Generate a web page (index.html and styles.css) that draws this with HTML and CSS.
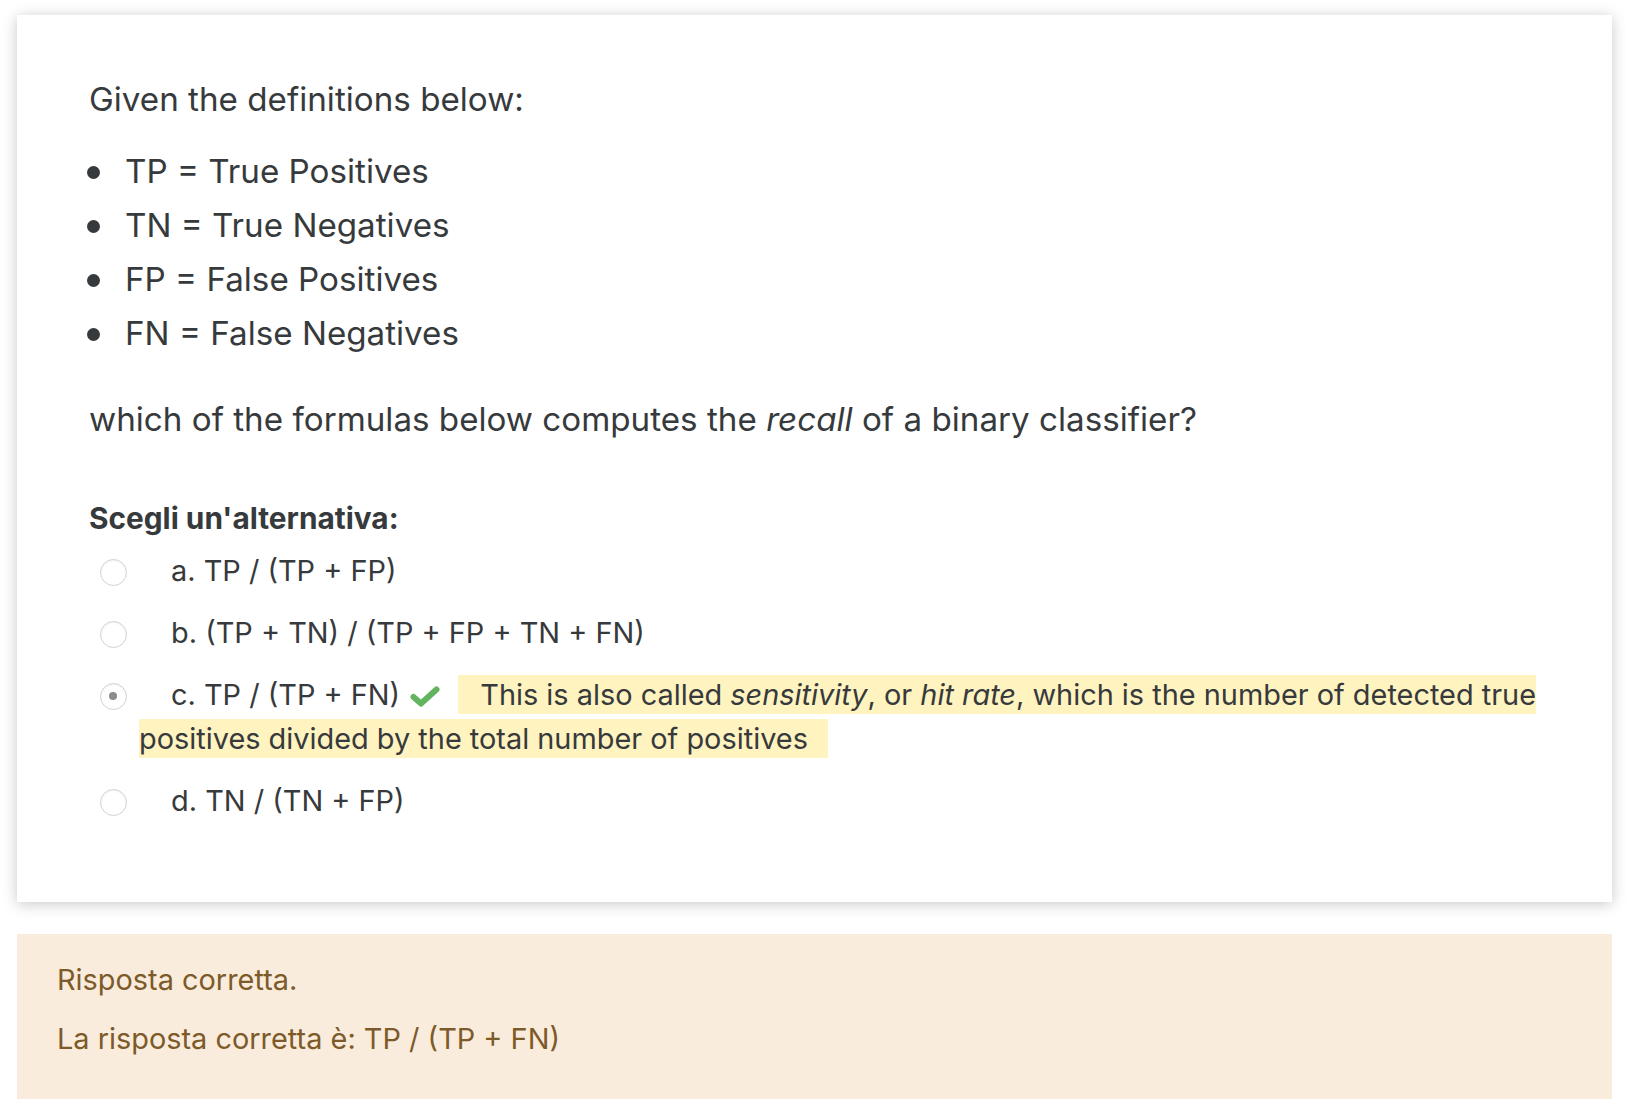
FILE: index.html
```html
<!DOCTYPE html>
<html lang="en">
<head>
<meta charset="utf-8">
<title>Quiz question</title>
<link rel="stylesheet" href="styles.css">
</head>
<body>
<div class="page">
  <div class="card">
    <div class="qtext">
      <p class="lead">Given the definitions below:</p>
      <ul class="defs">
        <li>TP = True Positives</li>
        <li>TN = True Negatives</li>
        <li>FP = False Positives</li>
        <li>FN = False Negatives</li>
      </ul>
      <p class="ask">which of the formulas below computes the <em>recall</em> of a binary classifier?</p>
    </div>
    <div class="prompt">Scegli un'alternativa:</div>
    <div class="answers">
      <div class="option"><span class="radio"></span><span class="label">a. TP / (TP + FP)</span></div>
      <div class="option"><span class="radio"></span><span class="label">b. (TP + TN) / (TP + FP + TN + FN)</span></div>
      <div class="option"><span class="radio checked"></span><span class="label">c. TP / (TP + FN)</span> <svg class="check" width="30" height="21" viewBox="0 0 30 21"><polyline points="3.5,11 11,17.5 26.5,3.5" fill="none" stroke="#62b45e" stroke-width="6" stroke-linecap="round" stroke-linejoin="round"/></svg><span class="fb">This is also called <em>sensitivity</em>, or <em>hit rate</em>, which is the number of detected true positives divided by the total number of positives</span></div>
      <div class="option"><span class="radio"></span><span class="label">d. TN / (TN + FP)</span></div>
    </div>
  </div>
  <div class="outcome">
    <p>Risposta corretta.</p>
    <p>La risposta corretta è: TP / (TP + FN)</p>
  </div>
</div>
</body>
</html>
```
FILE: styles.css
```css
html, body {
  margin: 0;
  padding: 0;
  background: #ffffff;
}
body {
  font-family: Inter, "Noto Sans", sans-serif;
  color: #373a3c;
}
.page {
  padding: 15px 18px 0 17px;
}
.card {
  background: #ffffff;
  box-shadow: 0 2px 14px rgba(0, 0, 0, 0.22);
  padding: 57px 72px 79px 72px;
}
.qtext {
  font-size: 33.2px;
  line-height: 54px;
}
.qtext p {
  margin: 0;
}
.defs {
  margin: 18px 0 32px 0;
  padding-left: 36px;
  list-style: none;
}
.defs li::before {
  content: "";
  display: inline-block;
  width: 13px;
  height: 13px;
  border-radius: 50%;
  background: #373a3c;
  margin-left: -38px;
  margin-right: 25px;
  vertical-align: 4px;
}
.prompt {
  margin-top: 52px;
  font-size: 29.8px;
  line-height: 40px;
  font-weight: 700;
}
.answers {
  margin-top: 11px;
  font-size: 28.9px;
  line-height: 44px;
}
.option {
  padding-left: 50px;
  text-indent: -39px;
  margin-bottom: 18px;
}
.option:last-child {
  margin-bottom: 0;
}
.radio {
  display: inline-block;
  text-indent: 0;
  width: 27px;
  height: 27px;
  box-sizing: border-box;
  border: 1.5px solid #d2d2d2;
  border-radius: 50%;
  box-shadow: inset 0 1px 2px rgba(0, 0, 0, 0.06);
  vertical-align: -5px;
  margin-right: 44px;
  position: relative;
}
.radio.checked::after {
  content: "";
  position: absolute;
  left: 8px;
  top: 8px;
  width: 8px;
  height: 8px;
  border-radius: 50%;
  background: #8c8c8c;
}
.check {
  display: inline-block;
  vertical-align: -2px;
  margin-left: 2px;
  margin-right: 18px;
}
.fb {
  background: #fff3bf;
  padding: 2px 20px 2px 22px;
}
.outcome {
  margin-top: 32px;
  background: #faecdc;
  color: #7d5a29;
  padding: 24px 40px 38px 40px;
  font-size: 28.9px;
  line-height: 44px;
}
.outcome p {
  margin: 0 0 15px 0;
}
.outcome p:last-child {
  margin-bottom: 0;
}
```
